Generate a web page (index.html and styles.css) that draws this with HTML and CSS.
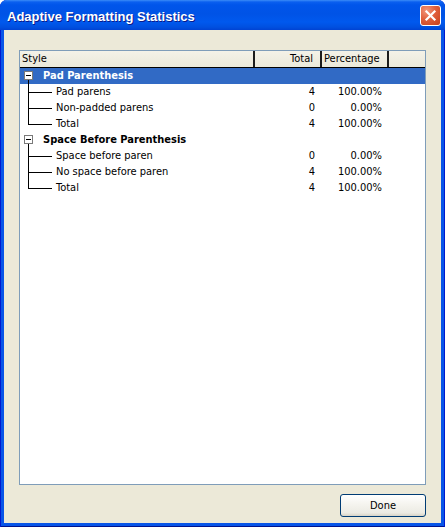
FILE: index.html
```html
<!DOCTYPE html>
<html>
<head>
<meta charset="utf-8">
<title>Adaptive Formatting Statistics</title>
<link rel="stylesheet" href="styles.css">
</head>
<body>
<div class="window">
  <div class="titlebar">
    <span class="title">Adaptive Formatting Statistics</span>
    <button class="close" aria-label="Close">
      <svg width="21" height="21" viewBox="0 0 21 21"><path d="M6.5 6.5 L14.5 14.5 M14.5 6.5 L6.5 14.5" stroke="#fff" stroke-width="2.2" stroke-linecap="square"/></svg>
    </button>
  </div>
  <div class="client">
    <div class="listbox">
      <div class="header">
        <div class="hcell">Style</div>
        <div class="hcell right">Total</div>
        <div class="hcell">Percentage</div>
        <div class="hcell last"></div>
      </div>

      <div class="row selected">
        <div class="cell tree"><span class="expander"></span><span class="glabel">Pad Parenthesis</span></div>
        <div class="cell num"></div>
        <div class="cell num"></div>
      </div>
      <div class="row">
        <div class="cell tree"><span class="branch"></span>Pad parens</div>
        <div class="cell num">4</div>
        <div class="cell num">100.00%</div>
      </div>
      <div class="row">
        <div class="cell tree"><span class="branch"></span>Non-padded parens</div>
        <div class="cell num">0</div>
        <div class="cell num">0.00%</div>
      </div>
      <div class="row">
        <div class="cell tree"><span class="branch end"></span>Total</div>
        <div class="cell num">4</div>
        <div class="cell num">100.00%</div>
      </div>

      <div class="row">
        <div class="cell tree"><span class="expander"></span><span class="glabel">Space Before Parenthesis</span></div>
        <div class="cell num"></div>
        <div class="cell num"></div>
      </div>
      <div class="row">
        <div class="cell tree"><span class="branch"></span>Space before paren</div>
        <div class="cell num">0</div>
        <div class="cell num">0.00%</div>
      </div>
      <div class="row">
        <div class="cell tree"><span class="branch"></span>No space before paren</div>
        <div class="cell num">4</div>
        <div class="cell num">100.00%</div>
      </div>
      <div class="row">
        <div class="cell tree"><span class="branch end"></span>Total</div>
        <div class="cell num">4</div>
        <div class="cell num">100.00%</div>
      </div>
    </div>
    <div class="buttons">
      <button class="done">Done</button>
    </div>
  </div>
</div>
</body>
</html>
```

FILE: styles.css
```css
* { box-sizing: border-box; }
html, body { margin: 0; padding: 0; background: #ffffff; }
body { width: 445px; height: 527px; overflow: hidden; }

.window {
  width: 445px;
  height: 527px;
  display: flex;
  flex-direction: column;
  background: #0855e8;
  border-radius: 7px 7px 0 0;
  box-shadow: inset 1px 0 #0019cf, inset -1px 0 #0019cf, inset 0 -1px #00138c;
  font-family: "DejaVu Sans Condensed", "DejaVu Sans", "Liberation Sans", sans-serif;
  font-stretch: condensed;
  font-size: 11px;
  color: #000;
}

.titlebar {
  height: 30px;
  flex: none;
  display: flex;
  align-items: center;
  justify-content: space-between;
  padding: 5px 4px 4px 7px;
  border-radius: 7px 7px 0 0;
  background: linear-gradient(180deg, #3b8cf7 0px, #0a5fef 2px, #0055ea 5px, #0053e6 14px, #0059ee 22px, #0050e0 27px, #0043d3 30px);
}

.title {
  font-family: "Liberation Sans", Arial, sans-serif;
  font-stretch: normal;
  font-weight: bold;
  font-size: 13px;
  color: #fff;
  text-shadow: 1px 1px 0 #0a1a8a;
  padding-top: 1px;
}

.close {
  width: 21px;
  height: 21px;
  padding: 0;
  margin: 0;
  border: 1px solid #fff;
  border-radius: 3px;
  background: radial-gradient(circle at 30% 25%, #f2967c 0%, #e0603d 45%, #c9401a 100%);
  display: flex;
  align-items: center;
  justify-content: center;
}
.close svg { display: block; margin: -1px; }

.client {
  flex: 1;
  margin: 0 4px 4px 4px;
  background: #ece9d8;
  display: flex;
  flex-direction: column;
  padding: 20px 15px 6px 15px;
  gap: 9px;
}

.listbox {
  flex: 1;
  background: #fff;
  border: 1px solid #7f9db9;
}

.header,
.row {
  display: grid;
  grid-template-columns: 235px 67px 67px 1fr;
  height: 16px;
  line-height: 16px;
}

.header {
  height: 17px;
  background: linear-gradient(180deg, #f4f2e8 0%, #ebe9da 100%);
  border-bottom: 1px solid #000;
}

.hcell {
  padding-left: 2px;
  border-right: 2px solid #1c1c1c;
  white-space: nowrap;
  overflow: hidden;
}
.hcell.right { text-align: right; padding-right: 7px; padding-left: 0; }
.hcell.last { border-right: none; }

.row.selected { background: #316ac5; color: #fff; }

.cell { white-space: nowrap; }
.cell.num { text-align: right; padding-right: 7px; }

.tree {
  display: flex;
  align-items: flex-start;
  padding-left: 4px;
}

.expander {
  position: relative;
  width: 9px;
  height: 9px;
  margin-top: 3px;
  border: 1px solid #7a7a7a;
  background: #fff;
  flex: none;
}
.expander::before {
  content: "";
  position: absolute;
  left: 1px;
  top: 3px;
  width: 5px;
  height: 1px;
  background: #000;
}
.expander::after {
  content: "";
  position: absolute;
  left: 3px;
  top: 8px;
  width: 1px;
  height: 4px;
  background: #000;
}

.glabel {
  margin-left: 10px;
  font-weight: bold;
}

.branch {
  position: relative;
  flex: none;
  width: 24px;
  height: 16px;
  margin-left: 4px;
  margin-right: 4px;
}
.branch::before {
  content: "";
  position: absolute;
  left: 0;
  top: 0;
  width: 1px;
  height: 16px;
  background: #000;
}
.branch.end::before { height: 9px; }
.branch::after {
  content: "";
  position: absolute;
  left: 0;
  top: 8px;
  width: 24px;
  height: 1px;
  background: #000;
}

.buttons {
  display: flex;
  justify-content: flex-end;
}

.done {
  width: 86px;
  height: 23px;
  padding: 0;
  border: 1px solid #003c74;
  border-radius: 3px;
  background: linear-gradient(180deg, #ffffff 0%, #f6f5f0 40%, #ecebe3 85%, #d8d3c6 100%);
  font-family: "DejaVu Sans Condensed", "DejaVu Sans", "Liberation Sans", sans-serif;
  font-stretch: condensed;
  font-size: 11px;
  color: #000;
}
```
